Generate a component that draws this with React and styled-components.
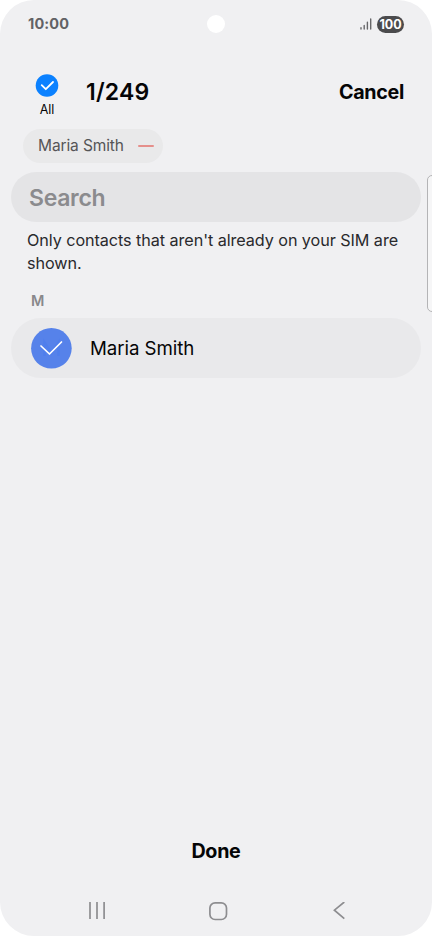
import React from "react";
import styled, { createGlobalStyle } from "styled-components";

const GlobalStyle = createGlobalStyle`
  * { box-sizing: border-box; }
  body { margin: 0; background: #fff; font-family: Inter, "Liberation Sans", sans-serif; }
  button { font: inherit; border: 0; background: none; padding: 0; margin: 0; }
  svg { display: block; flex: none; }
`;

const Screen = styled.div`
  position: relative;
  width: 432px;
  height: 936px;
  display: flex;
  flex-direction: column;
  overflow: hidden;
  border-radius: 34px;
  background: #f0f0f2;
`;

const Label = styled.span`
  display: block;
  white-space: nowrap;
  font-size: ${(p) => p.$size}px;
  font-weight: ${(p) => p.$weight || 400};
  letter-spacing: ${(p) => p.$spacing || 0}px;
  line-height: ${(p) => p.$line || 24}px;
  color: ${(p) => p.$color || "#050506"};
`;

const StatusBar = styled.div`
  height: 48px;
  flex: none;
  display: grid;
  grid-template-columns: 1fr 18px 1fr;
  align-items: center;
  padding: 0 28px 0 28px;
`;

const Camera = styled.div`
  width: 18px;
  height: 18px;
  border-radius: 50%;
  background: #fff;
`;

const StatusIcons = styled.div`
  display: flex;
  justify-content: flex-end;
  align-items: center;
  gap: 5px;
`;

const Battery = styled.div`
  width: 27px;
  height: 17px;
  display: flex;
  align-items: center;
  justify-content: center;
  border-radius: 8.5px;
  background: #4b4b4d;
`;

const Header = styled.header`
  height: 81px;
  flex: none;
  display: flex;
  align-items: flex-start;
  padding: 26px 28px 0 35px;
`;

const SelectAll = styled.button`
  width: 24px;
  margin-right: 27px;
  display: flex;
  flex-direction: column;
  align-items: center;
  gap: 4px;
`;

const Count = styled.div`
  flex: 1;
  padding-top: 5px;
`;

const Cancel = styled.button`
  padding-top: 6px;
`;

const Chip = styled.button`
  width: 140px;
  height: 34px;
  flex: none;
  margin-left: 23px;
  padding: 0 9px 0 15px;
  display: flex;
  align-items: center;
  justify-content: space-between;
  border-radius: 17px;
  background: #e9e9ea;
`;

const RemoveMark = styled.span`
  width: 16px;
  height: 2px;
  border-radius: 1px;
  background: #e58f8b;
`;

const SearchField = styled.div`
  height: 50px;
  flex: none;
  margin: 9px 11px 0;
  padding: 1px 18px 0;
  display: flex;
  align-items: center;
  border-radius: 25px;
  background: #e4e4e6;
`;

const Hint = styled.div`
  height: 46px;
  flex: none;
  margin: 7px 27px 1px;
`;

const SectionTitle = styled.div`
  height: 42px;
  flex: none;
  padding: 13px 0 0 31px;
`;

const ContactRow = styled.div`
  height: 60px;
  flex: none;
  margin: 0 11px;
  padding: 0 20px;
  display: flex;
  align-items: center;
  gap: 18px;
  border-radius: 30px;
  background: #e9e9eb;
`;

const ContactName = styled.div`
  padding-top: 2px;
`;

const Spacer = styled.div`
  flex: 1;
`;

const Footer = styled.footer`
  height: 46px;
  flex: none;
  display: flex;
  align-items: center;
  justify-content: center;
`;

const NavBar = styled.nav`
  height: 62px;
  flex: none;
  display: flex;
  justify-content: space-between;
  align-items: flex-start;
  padding: 28px 86px 0 87px;
`;

const EdgeHandle = styled.div`
  position: absolute;
  right: -6px;
  top: 175px;
  width: 11px;
  height: 137px;
  border: 1.5px solid #b4b4b6;
  border-radius: 5px;
  background: #f6f6f7;
`;

const SignalIcon = () => (
  <svg width="12" height="12" viewBox="0 0 12 12" stroke="#67676a" strokeWidth="1.4" strokeLinecap="round">
    <path d="M1 9.8V11M4.2 7.4V11M7.4 4.3V11M10.7 1V11" />
  </svg>
);

const SelectedIcon = () => (
  <svg width="24" height="24" viewBox="0 0 24 24" fill="none">
    <circle cx="12" cy="11.5" r="11.3" fill="#0b81ff" />
    <path d="M6.7 11.2L10.8 15.2L18 8" stroke="#fff" strokeWidth="1.8" strokeLinecap="round" strokeLinejoin="round" />
  </svg>
);

const Avatar = () => (
  <svg width="41" height="41" viewBox="0 0 41 41" fill="none">
    <circle cx="20.4" cy="20.3" r="20.3" fill="#5682ea" />
    <path d="M13.5 28V14.5L20.5 25L27.5 14.5V28" stroke="#4f7eec" strokeWidth="2.4" />
    <path d="M10 18L18.5 26L30.5 14" stroke="#fff" strokeWidth="1.7" strokeLinecap="round" strokeLinejoin="round" />
  </svg>
);

const RecentsIcon = () => (
  <svg width="18" height="18" viewBox="0 0 18 18" stroke="#8d8d90" strokeWidth="1.7">
    <path d="M3 0V17M10 0V17M17.1 0V17" />
  </svg>
);

const HomeIcon = () => (
  <svg width="20" height="20" viewBox="0 0 20 20" fill="none" stroke="#8d8d90" strokeWidth="1.7">
    <rect x="0.9" y="0.9" width="16.6" height="16.6" rx="5.2" />
  </svg>
);

const BackIcon = () => (
  <svg width="14" height="18" viewBox="0 0 14 18" fill="none" stroke="#8d8d90" strokeWidth="1.7">
    <path d="M12.3 0L2.4 8.2L12.3 16.6" />
  </svg>
);

export default function App() {
  return (
    <>
      <GlobalStyle />
      <Screen>
        <StatusBar>
          <Label $size={14.5} $weight={700} $spacing={0.15} $color="#626265">10:00</Label>
          <Camera />
          <StatusIcons>
            <SignalIcon />
            <Battery>
              <Label $size={12.5} $weight={700} $line={17} $color="#fff">100</Label>
            </Battery>
          </StatusIcons>
        </StatusBar>
        <Header>
          <SelectAll>
            <SelectedIcon />
            <Label $size={12.5} $line={15}>All</Label>
          </SelectAll>
          <Count>
            <Label $size={23} $weight={600} $spacing={0.2} $line={26}>1/249</Label>
          </Count>
          <Cancel>
            <Label $size={19.7} $weight={700} $spacing={-0.3}>Cancel</Label>
          </Cancel>
        </Header>
        <Chip>
          <Label $size={15.5} $spacing={-0.12} $color="#555557">Maria Smith</Label>
          <RemoveMark />
        </Chip>
        <SearchField>
          <Label $size={23} $weight={600} $spacing={-0.3} $color="#8b8b8e">Search</Label>
        </SearchField>
        <Hint>
          <Label $size={16.2} $spacing={-0.07} $line={22.5} $color="#29292c">Only contacts that aren't already on your SIM are</Label>
          <Label $size={16.2} $spacing={-0.07} $line={22.5} $color="#29292c">shown.</Label>
        </Hint>
        <SectionTitle>
          <Label $size={14.5} $weight={600} $color="#88888b">M</Label>
        </SectionTitle>
        <ContactRow>
          <Avatar />
          <ContactName>
            <Label $size={18.7} $spacing={-0.08}>Maria Smith</Label>
          </ContactName>
        </ContactRow>
        <Spacer />
        <Footer>
          <Label $size={19.7} $weight={700} $spacing={-0.3}>Done</Label>
        </Footer>
        <NavBar>
          <RecentsIcon />
          <HomeIcon />
          <BackIcon />
        </NavBar>
        <EdgeHandle />
      </Screen>
    </>
  );
}
